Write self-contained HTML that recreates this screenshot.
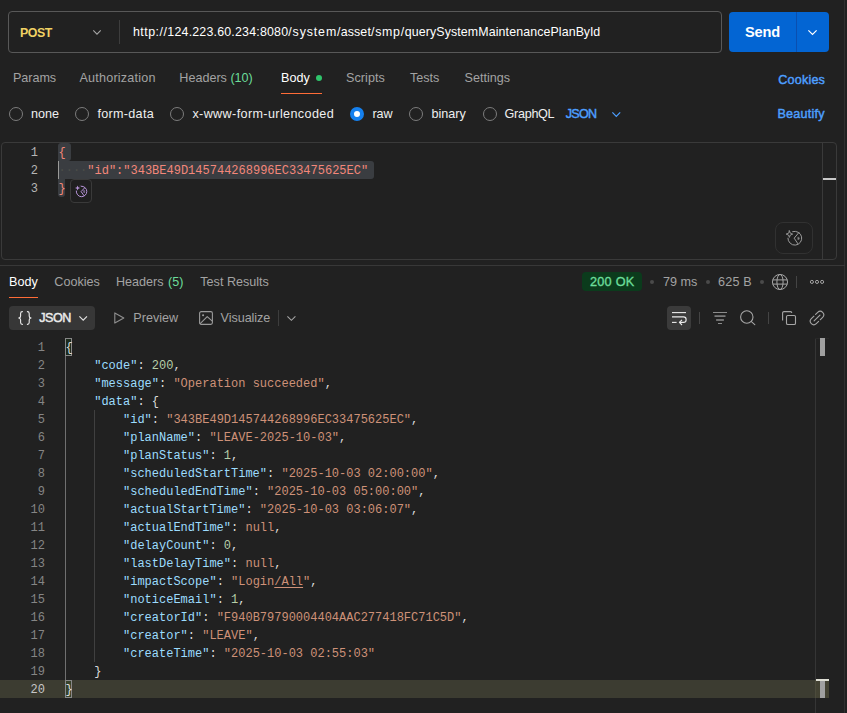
<!DOCTYPE html>
<html>
<head>
<meta charset="utf-8">
<title>Postman</title>
<style>
*{box-sizing:border-box;margin:0;padding:0}
html,body{width:847px;height:713px;overflow:hidden;background:#212121}
body{font-family:"Liberation Sans",sans-serif;color:#a6a6a6;font-size:12px;position:relative}
.abs{position:absolute;white-space:nowrap}
.t{position:absolute;white-space:nowrap;line-height:16px;font-size:12.6px;color:#a3a3a3}
.w{color:#fff}
.l{color:#efefef}
.g{color:#6bdd9a}
.b{color:#4d9fff;-webkit-text-stroke:0.45px #4d9fff}
.radio{position:absolute;width:14.2px;height:14.2px;border:1px solid #7c7c7c;border-radius:50%}
.mono{font-family:"Liberation Mono",monospace;font-size:12px;line-height:18px;white-space:pre;position:absolute}
.ln{color:#858585;text-align:right}
.k{color:#9cdcfe}.s{color:#ce9178}.n{color:#b5cea8}.p{color:#dcdcdc}
.r{color:#f3877a}
.sep{position:absolute;width:1px;background:#444}
.dot{position:absolute;width:4px;height:4px;border-radius:50%;background:#4a4a4a}
svg{position:absolute;overflow:visible}
</style>
</head>
<body>

<!-- right page edge -->
<div class="abs" style="left:844px;top:0;width:1px;height:713px;background:#303030"></div>

<!-- URL bar -->
<div class="abs" style="left:8px;top:11px;width:714px;height:42px;border:1px solid #585858;border-radius:4px"></div>
<div class="t" style="left:20px;top:25px;font-size:12.4px;font-weight:bold;color:#f0d264;letter-spacing:-0.45px">POST</div>
<svg style="left:93px;top:30px" width="8" height="5" viewBox="0 0 8 5"><path d="M0.3 0.4 L4 4.1 L7.7 0.4" fill="none" stroke="#a6a6a6" stroke-width="1.1"/></svg>
<div class="sep" style="left:119px;top:20px;height:24px;background:#3d3d3d"></div>
<div class="t w" style="left:133px;top:24px;font-size:12.4px;letter-spacing:0.27px" id="url"><span style="letter-spacing:0.48px">http://</span><span style="letter-spacing:0.2px">124.223.60.234:8080</span><span style="letter-spacing:0.87px">/system</span><span style="letter-spacing:0.14px">/asset</span><span style="letter-spacing:0.7px">/smp/</span><span style="letter-spacing:0.11px">querySystemMaintenancePlan</span><span style="letter-spacing:-0.1px">ById</span></div>

<!-- Send -->
<div class="abs" style="left:729px;top:12px;width:100px;height:40px;background:#0365d3;border-radius:4px"></div>
<div class="abs" style="left:796px;top:12px;width:1px;height:40px;background:#0a4fb0"></div>
<div class="t w" style="left:745px;top:23px;font-size:14.6px;line-height:18px;font-weight:bold;letter-spacing:-0.2px">Send</div>
<svg style="left:808px;top:29.5px" width="9" height="5" viewBox="0 0 9 5"><path d="M0.4 0.4 L4.5 4.4 L8.6 0.4" fill="none" stroke="#fff" stroke-width="1.2"/></svg>

<!-- request tabs -->
<div class="t" style="left:13px;top:70px;letter-spacing:-0.05px">Params</div>
<div class="t" style="left:79.5px;top:70px;letter-spacing:0.2px">Authorization</div>
<div class="t" style="left:179.3px;top:70px">Headers <span class="g">(10)</span></div>
<div class="t w" style="left:281px;top:70px">Body</div>
<div class="abs" style="left:316px;top:74.5px;width:6.4px;height:6.4px;border-radius:50%;background:#2fc46b"></div>
<div class="abs" style="left:281px;top:92.5px;width:41.4px;height:1.3px;background:#ff6c37"></div>
<div class="t" style="left:346px;top:70px;letter-spacing:0.05px">Scripts</div>
<div class="t" style="left:410px;top:70px">Tests</div>
<div class="t" style="left:464.5px;top:70px">Settings</div>
<div class="t b" style="left:778.2px;top:72px;letter-spacing:0.2px">Cookies</div>

<!-- body type radios -->
<div class="radio" style="left:8.6px;top:106.8px"></div>
<div class="t l" style="left:31px;top:106px">none</div>
<div class="radio" style="left:74.8px;top:106.8px"></div>
<div class="t l" style="left:97.4px;top:106px;letter-spacing:0.3px">form-data</div>
<div class="radio" style="left:169.7px;top:106.8px"></div>
<div class="t l" style="left:192.4px;top:106px;letter-spacing:0.38px">x-www-form-urlencoded</div>
<div class="radio" style="left:350px;top:106.8px;border:4.2px solid #1580ee;background:#fff"></div>
<div class="t l" style="left:372.4px;top:106px">raw</div>
<div class="radio" style="left:408.6px;top:106.8px"></div>
<div class="t l" style="left:431.4px;top:106px">binary</div>
<div class="radio" style="left:482.9px;top:106.8px"></div>
<div class="t l" style="left:504.6px;top:106px;letter-spacing:-0.3px">GraphQL</div>
<div class="t b" style="left:565.7px;top:106px;letter-spacing:-0.7px">JSON</div>
<svg style="left:612px;top:111.6px" width="9" height="5" viewBox="0 0 9 5"><path d="M0.4 0.4 L4.3 4.3 L8.2 0.4" fill="none" stroke="#4d9fff" stroke-width="1.2"/></svg>
<div class="t b" style="left:777.4px;top:106px;letter-spacing:0.22px">Beautify</div>

<!-- request editor -->
<div class="abs" style="left:1px;top:142px;width:836px;height:118px;border:1px solid #3a3a3a;border-radius:4px"></div>
<div class="abs" style="left:822px;top:143px;width:1px;height:116px;background:#3a3a3a"></div>
<div class="abs" style="left:823px;top:178px;width:13px;height:2px;background:#c8c8c8"></div>
<!-- selection -->
<div class="abs" style="left:58px;top:143px;width:13.4px;height:18px;background:#3a3d41;border-radius:3px 3px 3px 0"></div>
<div class="abs" style="left:58px;top:161px;width:316px;height:18px;background:#3a3d41;border-radius:0 3px 3px 0"></div>
<div class="abs" style="left:58px;top:179px;width:7px;height:18px;background:#3a3d41;border-radius:0 0 3px 3px"></div>
<div class="abs" style="left:58px;top:161px;width:1px;height:18px;background:#9a9a98"></div>
<div class="mono ln" style="left:0;top:144px;width:38px;color:#b5b5b5">1
2
3</div>
<div class="mono" style="left:58.5px;top:144px;color:#4b4d49">
&#183;&#183;&#183;&#183;</div>
<div class="mono r" style="left:58.5px;top:144px">{
    "id":"343BE49D145744268996EC33475625EC"
}</div>
<!-- postbot small -->
<div class="abs" style="left:70px;top:179px;width:22px;height:24px;border:1px solid #3a3a3a;border-radius:4px;background:#1f1f1f"></div>
<svg style="left:75px;top:185px" width="13" height="13" viewBox="0 0 13 13" fill="none" stroke="#b794d9" stroke-width="1" stroke-linecap="round" stroke-linejoin="round">
 <path d="M6.3 1.2 A5.25 5.25 0 1 1 1.3 6"/>
 <path d="M9.5 3 L6.1 6.6 L9 10.6"/>
 <path d="M9.2 5.6 L9.6 6.7 L9.2 7.8 L8.8 6.7 Z" stroke-width="0.6"/>
 <path d="M2.6 0.5 L3.3 2.3 L5.2 3 L3.3 3.7 L2.6 5.5 L1.9 3.7 L0 3 L1.9 2.3 Z" fill="#b794d9" stroke="none"/>
 <circle cx="5.1" cy="0.9" r="0.45" fill="#b794d9" stroke="none"/>
</svg>
<!-- postbot big -->
<div class="abs" style="left:775px;top:222px;width:38px;height:32px;border:1px solid #313131;border-radius:8px;background:#202020"></div>
<svg style="left:786px;top:229px" width="18" height="18" viewBox="0 0 18 18" fill="none" stroke="#9c9c9c" stroke-width="1" stroke-linecap="round" stroke-linejoin="round">
 <path d="M6.8 2.6 A6.9 6.9 0 1 1 1.9 9.2"/>
 <path d="M13 3.4 L8.2 9.2 L11.8 14.6"/>
 <ellipse cx="12.4" cy="9.4" rx="0.45" ry="1.5" stroke-width="0.7"/>
 <path d="M3.4 1.8 L4.3 4.2 L6.7 5.1 L4.3 6 L3.4 8.4 L2.5 6 L0.1 5.1 L2.5 4.2 Z" stroke-width="0.9"/>
 <circle cx="6.9" cy="2.3" r="0.4" fill="#9c9c9c" stroke="none"/>
</svg>

<!-- divider -->
<div class="abs" style="left:0;top:265px;width:845px;height:1px;background:#383838"></div>

<!-- response tabs -->
<div class="t w" style="left:9px;top:274px">Body</div>
<div class="abs" style="left:9px;top:297px;width:29px;height:1.3px;background:#ff6c37"></div>
<div class="t" style="left:54.3px;top:274px">Cookies</div>
<div class="t" style="left:116px;top:274px;word-spacing:1px">Headers <span class="g">(5)</span></div>
<div class="t" style="left:200.3px;top:274px">Test Results</div>

<div class="abs" style="left:582.4px;top:272.2px;width:59.6px;height:19.2px;background:#0b3b1c;border-radius:4px"></div>
<div class="t" style="left:590px;top:274px;color:#6bdd9a;font-size:12.7px;letter-spacing:0.25px;-webkit-text-stroke:0.35px #6bdd9a">200 OK</div>
<div class="dot" style="left:650px;top:280px"></div>
<div class="t" style="left:663px;top:274px">79 ms</div>
<div class="dot" style="left:706px;top:280px"></div>
<div class="t" style="left:718px;top:274px;letter-spacing:0.2px">625 B</div>
<div class="dot" style="left:760px;top:280px"></div>
<!-- globe -->
<svg style="left:772px;top:274px" width="16" height="16" viewBox="0 0 16 16" fill="none" stroke="#a6a6a6" stroke-width="1">
 <circle cx="8" cy="8" r="7.55"/>
 <ellipse cx="8" cy="8" rx="3.1" ry="7.55"/>
 <path d="M0.8 5.9 H15.2 M0.8 10.1 H15.2"/>
</svg>
<div class="sep" style="left:796px;top:276px;height:12px"></div>
<svg style="left:809px;top:279px" width="16" height="6" viewBox="0 0 16 6" fill="none" stroke="#a6a6a6" stroke-width="1">
 <circle cx="2.9" cy="2.9" r="1.55"/><circle cx="8" cy="2.9" r="1.55"/><circle cx="13.1" cy="2.9" r="1.55"/>
</svg>

<!-- response toolbar -->
<div class="abs" style="left:9px;top:306.4px;width:86px;height:23.4px;background:#373737;border-radius:4px"></div>
<svg style="left:17px;top:311px" width="16" height="14" viewBox="0 0 16 14" fill="none" stroke="#ececec" stroke-width="1.1" stroke-linecap="round" stroke-linejoin="round">
 <path d="M5.4 0.6 C3.8 0.6 3.6 1.2 3.6 2.4 V4.9 C3.6 6.3 2.8 6.9 1.7 7 C2.8 7.1 3.6 7.7 3.6 9.1 V11.6 C3.6 12.8 3.8 13.4 5.4 13.4"/>
 <path d="M10.4 0.6 C12 0.6 12.2 1.2 12.2 2.4 V4.9 C12.2 6.3 13 6.9 14.1 7 C13 7.1 12.2 7.7 12.2 9.1 V11.6 C12.2 12.8 12 13.4 10.4 13.4"/>
</svg>
<div class="t" style="left:39.3px;top:310px;color:#ececec;letter-spacing:-0.5px;-webkit-text-stroke:0.45px #ececec">JSON</div>
<svg style="left:78.8px;top:316px" width="9" height="5" viewBox="0 0 9 5"><path d="M0.4 0.4 L4.2 4.1 L8 0.4" fill="none" stroke="#e0e0e0" stroke-width="1.2"/></svg>
<svg style="left:114px;top:312px" width="11" height="12" viewBox="0 0 11 12"><path d="M0.8 0.9 L9.8 6 L0.8 11.1 Z" fill="none" stroke="#8f8f8f" stroke-width="1.1" stroke-linejoin="round"/></svg>
<div class="t" style="left:133.3px;top:310px">Preview</div>
<svg style="left:199px;top:311px" width="14" height="14" viewBox="0 0 14 14" fill="none" stroke="#9a9a9a" stroke-width="1.1" stroke-linejoin="round">
 <rect x="0.6" y="0.6" width="12.8" height="12.8" rx="1.6"/>
 <path d="M0.9 12.8 L8.2 5.7 L13.3 10.2"/>
 <circle cx="4.1" cy="4.2" r="1.05" fill="#9a9a9a" stroke="none"/>
</svg>
<div class="t" style="left:220.6px;top:310px;letter-spacing:-0.05px">Visualize</div>
<div class="sep" style="left:278px;top:310px;height:16px;background:#3d3d3d"></div>
<svg style="left:286.5px;top:315.5px" width="9" height="5" viewBox="0 0 9 5"><path d="M0.4 0.4 L4.4 4.3 L8.4 0.4" fill="none" stroke="#a6a6a6" stroke-width="1.1"/></svg>

<!-- wrap -->
<div class="abs" style="left:667px;top:306px;width:24px;height:24px;background:#3b3b3b;border-radius:4px"></div>
<svg style="left:672px;top:312px" width="15" height="12" viewBox="0 0 15 12" fill="none" stroke="#ececec" stroke-width="1.1" stroke-linecap="butt" stroke-linejoin="round">
 <path d="M0 0.6 H14"/>
 <path d="M0 4.9 H11.4 A2.7 2.7 0 0 1 11.4 10.4 H7.6"/>
 <path d="M10 7.8 L7.4 10.4 L10 13"/>
 <path d="M0 10.4 H4.6"/>
</svg>
<div class="sep" style="left:699px;top:312px;height:12px"></div>
<!-- filter -->
<svg style="left:713px;top:312px" width="14" height="12" viewBox="0 0 14 12" fill="none" stroke="#8c8c8c">
 <path d="M0 0.5 H14" stroke-width="1"/>
 <path d="M1.5 4.1 H12.5" stroke-width="1.5"/>
 <path d="M3.1 8 H10.9" stroke-width="1.5"/>
 <path d="M5 11.5 H9" stroke-width="1"/>
</svg>
<!-- search -->
<svg style="left:739px;top:309px" width="17" height="17" viewBox="0 0 17 17" fill="none" stroke="#a6a6a6" stroke-width="1.1" stroke-linecap="round">
 <circle cx="7.8" cy="8" r="6.2"/><path d="M12.4 12.6 L15.8 15.6"/>
</svg>
<div class="sep" style="left:768px;top:312px;height:12px"></div>
<!-- copy -->
<svg style="left:782px;top:311px" width="14" height="14" viewBox="0 0 14 14" fill="none" stroke="#a6a6a6" stroke-width="1.1">
 <rect x="4.5" y="4.5" width="9" height="9" rx="1.3"/>
 <path d="M0.6 9.5 V2 A1.4 1.4 0 0 1 2 0.6 H8.4 A1.4 1.4 0 0 1 9.8 2"/>
</svg>
<!-- link -->
<svg style="left:817px;top:318.05px" width="1" height="1" viewBox="0 0 1 1" fill="none" stroke="#a6a6a6" stroke-width="1.1" stroke-linecap="round">
 <g transform="rotate(-45)">
  <path d="M1.5 -3.5 H4.5 A3.5 3.5 0 0 1 4.5 3.5 H1.0"/>
  <path d="M-0.8 -3.5 H-4.5 A3.5 3.5 0 0 0 -4.5 3.5 H-1.2"/>
  <path d="M-4.1 0 H4.2"/>
 </g>
</svg>

<!-- response body -->
<div class="abs" style="left:0;top:680px;width:816px;height:18px;background:#3c3c31"></div>
<div class="abs" style="left:816px;top:680px;width:13.3px;height:18px;background:#434233"></div>
<div class="abs" style="left:815px;top:338px;width:1px;height:375px;background:#353535"></div>
<div class="abs" style="left:815px;top:680px;width:1px;height:18px;background:#4c4b3c"></div>
<div class="abs" style="left:815px;top:338px;width:14px;height:1px;background:#282828"></div>
<div class="abs" style="left:820px;top:338px;width:5px;height:18px;background:#a0a0a0"></div>
<div class="abs" style="left:820px;top:681px;width:5.2px;height:17px;background:#a0a0a0"></div>
<div class="abs" style="left:816px;top:679.2px;width:13.3px;height:1.8px;background:#deded4"></div>
<!-- bracket match -->
<div class="abs" style="left:65px;top:338px;width:7.4px;height:18px;border:1px solid #888;background:#1c2a1c"></div>
<div class="abs" style="left:65px;top:680px;width:7.4px;height:18px;border:1px solid #888;background:#38422c"></div>
<!-- indent guides -->
<div class="abs" style="left:65px;top:356px;width:1px;height:324px;background:#707070"></div>
<div class="abs" style="left:94px;top:410px;width:1px;height:252px;background:#404040"></div>
<div class="mono ln" style="left:0;top:339px;width:45px">1
2
3
4
5
6
7
8
9
10
11
12
13
14
15
16
17
18
19
<span style="color:#c6c6c6">20</span></div>
<div class="mono p" style="left:65.4px;top:339px">{
    <span class="k">"code"</span>: <span class="n">200</span>,
    <span class="k">"message"</span>: <span class="s">"Operation succeeded"</span>,
    <span class="k">"data"</span>: {
        <span class="k">"id"</span>: <span class="s">"343BE49D145744268996EC33475625EC"</span>,
        <span class="k">"planName"</span>: <span class="s">"LEAVE-2025-10-03"</span>,
        <span class="k">"planStatus"</span>: <span class="n">1</span>,
        <span class="k">"scheduledStartTime"</span>: <span class="s">"2025-10-03 02:00:00"</span>,
        <span class="k">"scheduledEndTime"</span>: <span class="s">"2025-10-03 05:00:00"</span>,
        <span class="k">"actualStartTime"</span>: <span class="s">"2025-10-03 03:06:07"</span>,
        <span class="k">"actualEndTime"</span>: <span class="s">null</span>,
        <span class="k">"delayCount"</span>: <span class="n">0</span>,
        <span class="k">"lastDelayTime"</span>: <span class="s">null</span>,
        <span class="k">"impactScope"</span>: <span class="s">"Login<u style="text-underline-offset:2px">/All</u>"</span>,
        <span class="k">"noticeEmail"</span>: <span class="n">1</span>,
        <span class="k">"creatorId"</span>: <span class="s">"F940B79790004404AAC277418FC71C5D"</span>,
        <span class="k">"creator"</span>: <span class="s">"LEAVE"</span>,
        <span class="k">"createTime"</span>: <span class="s">"2025-10-03 02:55:03"</span>
    }
}</div>

</body>
</html>
